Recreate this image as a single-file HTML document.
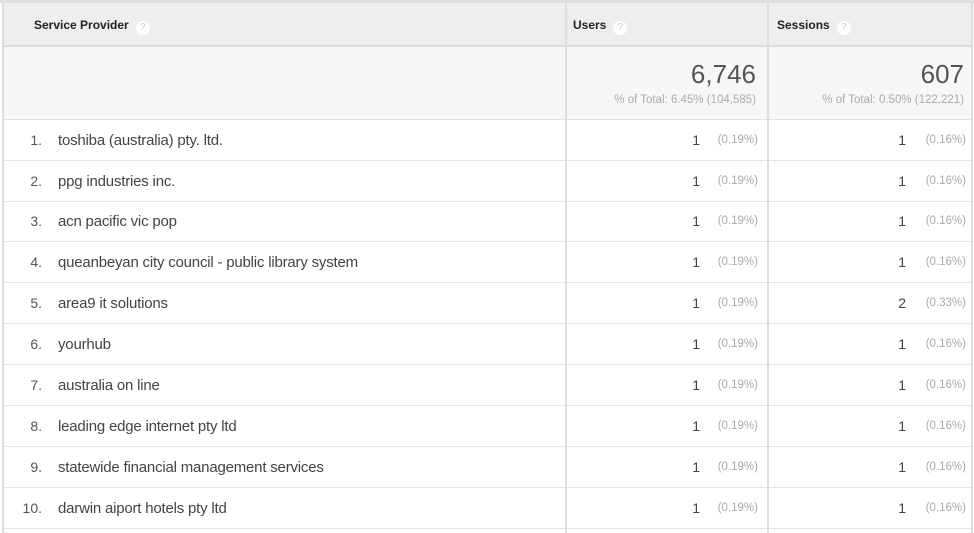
<!DOCTYPE html>
<html><head><style>
*{margin:0;padding:0;box-sizing:border-box}
body{width:974px;height:533px;background:#fff;position:relative;overflow:hidden;font-family:"Liberation Sans",Arial,sans-serif}
.a{position:absolute}
.hd{left:3px;top:3px;width:968px;height:44px;background:#eeeeee;border-bottom:2px solid #dcdcdc}
.sm{left:3px;top:47px;width:968px;height:73px;background:#f7f7f7;border-bottom:1px solid #e2e2e2}
.vl{top:3px;width:2px;height:530px;background:#dedede}
.ht{top:18px;font-size:12px;font-weight:bold;color:#222}
.q{display:inline-block;width:14px;height:14px;border-radius:50%;background:#fff;color:#c8c8c8;font-size:10px;text-align:center;line-height:14px;font-weight:normal;margin-left:7px;vertical-align:-1px}
.r{position:absolute;left:3px;width:968px;height:41px;border-bottom:1px solid #e4e4e4}
.r div{position:absolute;top:12px;white-space:nowrap}
.n{font-size:14px;color:#555;text-align:right;width:30px;left:9px}
.t{font-size:15px;color:#444;left:55px;letter-spacing:-0.2px}
.v{font-size:14px;color:#444;text-align:right;width:60px}
.p{font-size:11.5px;color:#aaa;text-align:right;width:70px;margin-top:2px}
.u1{left:637px}.u2{left:685px}.s1{left:843px}.s2{left:893px}
.big{font-size:26px;color:#555;text-align:right;width:190px;top:59px}
.tot{font-size:11.5px;color:#aaa;text-align:right;width:200px;top:94px}
</style></head><body>
<div class="a" style="left:0;top:0;width:974px;height:3px;background:#e0e0e0"></div>
<div class="a hd"></div>
<div class="a sm"></div>
<div class="r" style="top:120px"><div class="n">1.</div><div class="t">toshiba (australia) pty. ltd.</div><div class="v u1">1</div><div class="p u2">(0.19%)</div><div class="v s1">1</div><div class="p s2">(0.16%)</div></div>
<div class="r" style="top:161px"><div class="n">2.</div><div class="t">ppg industries inc.</div><div class="v u1">1</div><div class="p u2">(0.19%)</div><div class="v s1">1</div><div class="p s2">(0.16%)</div></div>
<div class="r" style="top:201px"><div class="n">3.</div><div class="t">acn pacific vic pop</div><div class="v u1">1</div><div class="p u2">(0.19%)</div><div class="v s1">1</div><div class="p s2">(0.16%)</div></div>
<div class="r" style="top:242px"><div class="n">4.</div><div class="t">queanbeyan city council - public library system</div><div class="v u1">1</div><div class="p u2">(0.19%)</div><div class="v s1">1</div><div class="p s2">(0.16%)</div></div>
<div class="r" style="top:283px"><div class="n">5.</div><div class="t">area9 it solutions</div><div class="v u1">1</div><div class="p u2">(0.19%)</div><div class="v s1">2</div><div class="p s2">(0.33%)</div></div>
<div class="r" style="top:324px"><div class="n">6.</div><div class="t">yourhub</div><div class="v u1">1</div><div class="p u2">(0.19%)</div><div class="v s1">1</div><div class="p s2">(0.16%)</div></div>
<div class="r" style="top:365px"><div class="n">7.</div><div class="t">australia on line</div><div class="v u1">1</div><div class="p u2">(0.19%)</div><div class="v s1">1</div><div class="p s2">(0.16%)</div></div>
<div class="r" style="top:406px"><div class="n">8.</div><div class="t">leading edge internet pty ltd</div><div class="v u1">1</div><div class="p u2">(0.19%)</div><div class="v s1">1</div><div class="p s2">(0.16%)</div></div>
<div class="r" style="top:447px"><div class="n">9.</div><div class="t">statewide financial management services</div><div class="v u1">1</div><div class="p u2">(0.19%)</div><div class="v s1">1</div><div class="p s2">(0.16%)</div></div>
<div class="r" style="top:488px"><div class="n">10.</div><div class="t">darwin aiport hotels pty ltd</div><div class="v u1">1</div><div class="p u2">(0.19%)</div><div class="v s1">1</div><div class="p s2">(0.16%)</div></div>
<div class="a vl" style="left:2px"></div>
<div class="a vl" style="left:565px"></div>
<div class="a vl" style="left:767px"></div>
<div class="a vl" style="left:971px"></div>
<div class="a ht" style="left:34px">Service Provider<span class="q">?</span></div>
<div class="a ht" style="left:573px">Users<span class="q">?</span></div>
<div class="a ht" style="left:777px">Sessions<span class="q">?</span></div>
<div class="a big" style="left:566px">6,746</div>
<div class="a tot" style="left:556px">% of Total: 6.45% (104,585)</div>
<div class="a big" style="left:774px">607</div>
<div class="a tot" style="left:764px">% of Total: 0.50% (122,221)</div>
</body></html>
